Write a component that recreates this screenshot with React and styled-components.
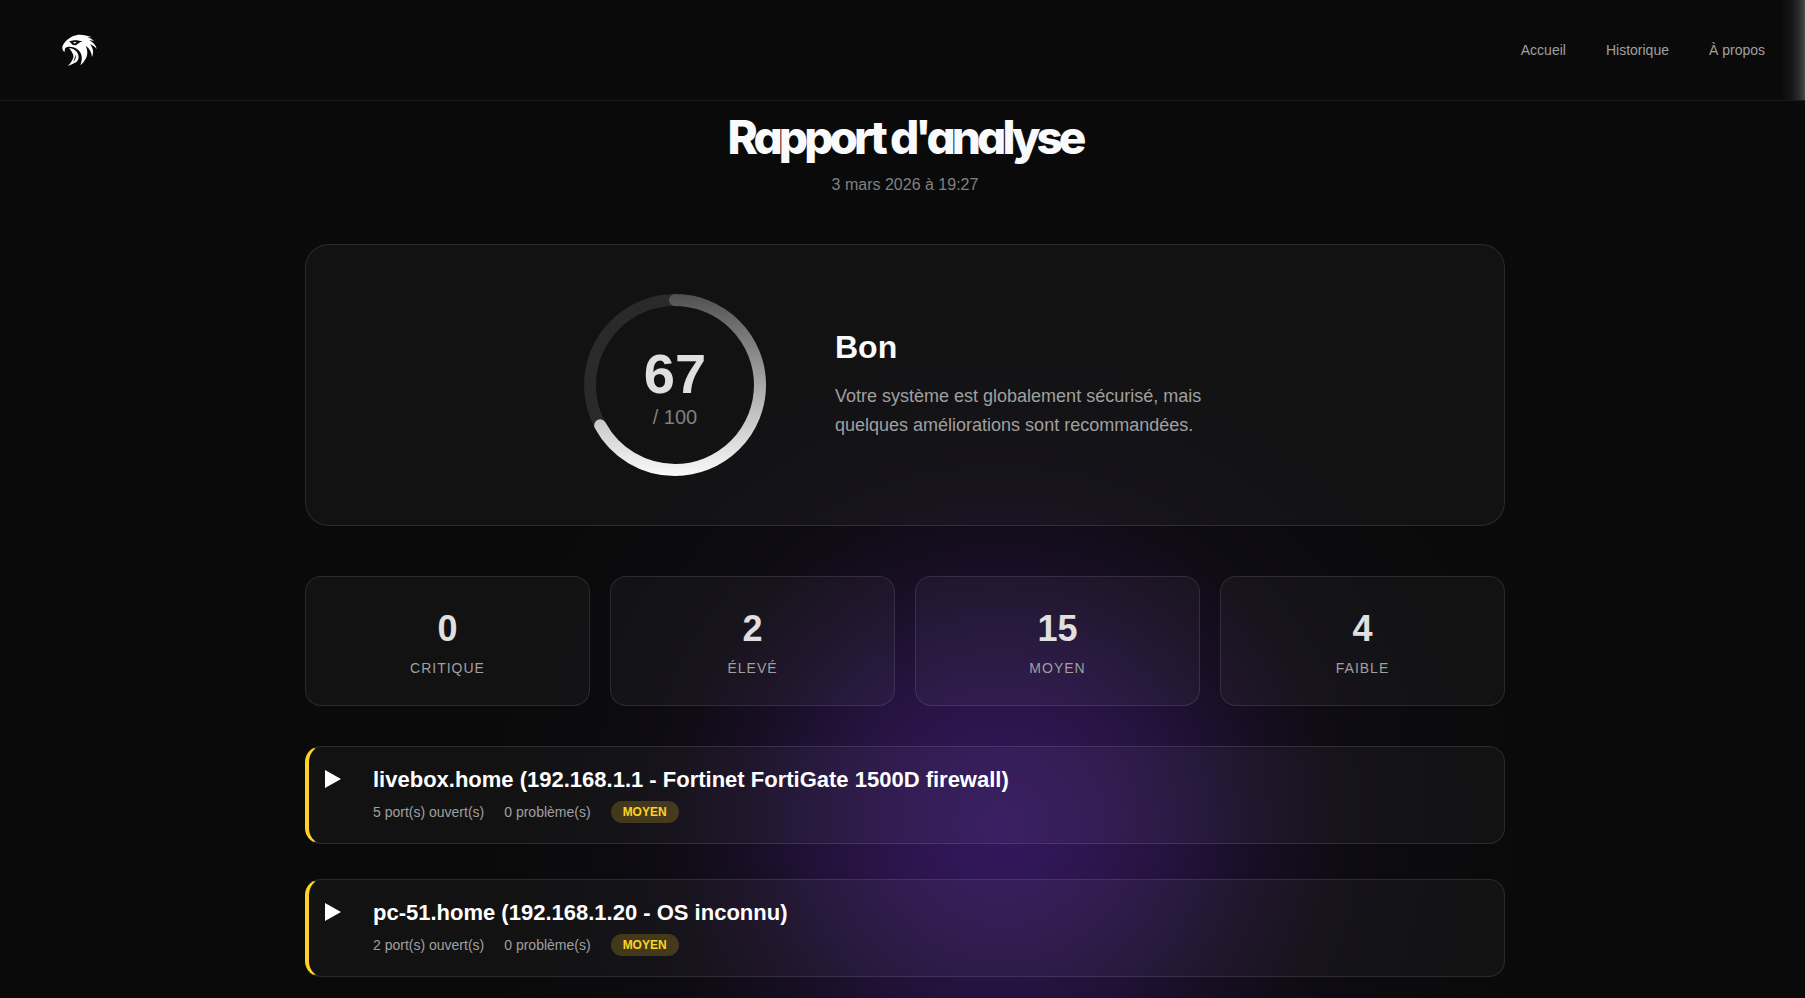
import React, { useState } from 'react';
import styled, { createGlobalStyle, css } from 'styled-components';

const GlobalStyle = createGlobalStyle`
  * {
    box-sizing: border-box;
  }

  body {
    margin: 0;
    background: #0a0a0a;
    color: #f8fafc;
    font-family: 'Liberation Sans', Arial, sans-serif;
    font-size: 16px;
    line-height: 24px;
    overflow: hidden;
  }

  h1, h2, h3, p, dl, dd {
    margin: 0;
  }
`;

const Page = styled.div`
  position: relative;
  height: 100vh;
  overflow: hidden;
`;

const Glow = styled.div`
  position: absolute;
  left: 1002px;
  top: 824px;
  width: 1080px;
  height: 1080px;
  transform: translate(-50%, -50%);
  pointer-events: none;
  background: radial-gradient(
    circle closest-side,
    rgba(88, 36, 168, 0.53) 0%,
    rgba(84, 34, 158, 0.48) 16%,
    rgba(78, 32, 144, 0.38) 32%,
    rgba(68, 28, 120, 0.23) 48%,
    rgba(52, 26, 100, 0.11) 62%,
    rgba(40, 24, 90, 0.04) 78%,
    transparent 100%
  );
`;

const Header = styled.header`
  position: relative;
  display: flex;
  align-items: center;
  justify-content: space-between;
  height: 101px;
  padding: 0 40px;
  border-bottom: 1px solid #181818;
  background:
    linear-gradient(to left, #4a4a4a 0, #2a2a2a 6px, #151515 14px, transparent 24px),
    #0a0a0a;
`;

const LogoLink = styled.a`
  display: flex;
  justify-content: center;
  width: 78px;
`;

const Nav = styled.nav`
  display: flex;
  gap: 40px;
`;

const NavLink = styled.a`
  color: #a0a0a0;
  font-size: 14px;
  text-decoration: none;
`;

const Main = styled.main`
  position: relative;
  padding: 8px 0 0 5px;
`;

const Container = styled.div`
  display: flex;
  flex-direction: column;
  max-width: 1200px;
  margin: 0 auto;
`;

const Title = styled.h1`
  font-family: Inter, sans-serif;
  font-feature-settings: 'cv11';
  font-size: 46px;
  font-weight: 800;
  line-height: 56px;
  letter-spacing: -4px;
  text-align: center;
`;

const ReportDate = styled.p`
  margin-top: 8px;
  color: #808080;
  text-align: center;
`;

const panel = css`
  border: 1px solid rgba(255, 255, 255, 0.1);
  background: rgba(255, 255, 255, 0.036);
`;

const ScoreCard = styled.section`
  ${panel}
  display: flex;
  align-items: center;
  justify-content: center;
  gap: 60px;
  height: 282px;
  margin-top: 47px;
  border-radius: 24px;
`;

const Gauge = styled.div`
  display: grid;
  place-items: center;

  > * {
    grid-area: 1 / 1;
  }
`;

const GaugeText = styled.div`
  display: flex;
  flex-direction: column;
  align-items: center;
  padding-top: 8px;
`;

const GaugeValue = styled.span`
  color: #e0e0e0;
  font-size: 56px;
  font-weight: 700;
  line-height: 56px;
`;

const GaugeMax = styled.span`
  color: #808080;
  font-size: 20px;
  line-height: 30px;
`;

const ScoreInfo = styled.div`
  width: 400px;
`;

const Grade = styled.h2`
  font-size: 32px;
  font-weight: 700;
  line-height: 34px;
`;

const Description = styled.p`
  margin-top: 18px;
  color: #a0a0a0;
  font-size: 18px;
  line-height: 29px;
`;

const Stats = styled.dl`
  display: grid;
  grid-template-columns: repeat(4, 1fr);
  gap: 20px;
  margin-top: 50px;
`;

const Stat = styled.div`
  ${panel}
  display: flex;
  flex-direction: column-reverse;
  justify-content: center;
  gap: 7px;
  height: 130px;
  padding-top: 6px;
  border-radius: 16px;
  text-align: center;
`;

const StatLabel = styled.dt`
  color: #a0a0a0;
  font-size: 14px;
  letter-spacing: 1px;
  text-transform: uppercase;
`;

const StatValue = styled.dd`
  color: #e0e0e0;
  font-size: 36px;
  font-weight: 700;
  line-height: 40px;
`;

const Hosts = styled.div`
  display: flex;
  flex-direction: column;
  gap: 35px;
  margin-top: 40px;
`;

const Host = styled.article`
  ${panel}
  display: flex;
  gap: 32px;
  height: 98px;
  padding: 18px 24px 0 16px;
  border-left: 4px solid #ffd324;
  border-radius: 16px;
`;

const Toggle = styled.button`
  display: flex;
  align-items: center;
  width: 16px;
  height: 28px;
  padding: 0;
  border: 0;
  background: none;
  color: #fff;
  cursor: pointer;

  svg {
    transform: rotate(${({ $open }) => ($open ? '90deg' : '0deg')});
  }
`;

const HostName = styled.h3`
  color: #fff;
  font-size: 22px;
  font-weight: 700;
  line-height: 30px;
`;

const HostMeta = styled.div`
  display: flex;
  align-items: center;
  gap: 20px;
  margin-top: 6px;
  color: #a0a0a0;
  font-size: 14px;
  line-height: 22px;
`;

const Badge = styled.span`
  padding: 0 12px;
  border-radius: 12px;
  background: rgba(255, 211, 36, 0.2);
  color: #ffd324;
  font-size: 12px;
  font-weight: 700;
  text-transform: uppercase;
`;

const stats = [
  { label: 'Critique', value: 0 },
  { label: 'Élevé', value: 2 },
  { label: 'Moyen', value: 15 },
  { label: 'Faible', value: 4 },
];

const hosts = [
  {
    id: 1, name: 'livebox.home (192.168.1.1 - Fortinet FortiGate 1500D firewall)', ports: 5, issues: 0, level: 'Moyen',
  },
  {
    id: 2, name: 'pc-51.home (192.168.1.20 - OS inconnu)', ports: 2, issues: 0, level: 'Moyen',
  },
];

function EagleLogo() {
  return (
    <svg width="35" height="32" viewBox="0 0 105 96" fill="#fff" aria-hidden="true">
      <path d="M8 54 C1 50 -1 40 3 33 C8 23 20 13 32 7 C46 0 66 0 90 10 L76 9 C86 13 92 17 98 22 C92 20 86 19 82 19 C94 26 102 34 104 45 C98 38 92 34 84 31 C93 42 96 54 90 69 C89 55 83 43 71 35 C78 50 78 66 68 79 C65 85 60 90 55 94 C60 80 62 66 54 54 C49 47 42 42 34 40 C25 37 16 37 10 42 C8 46 8 50 8 54 Z" />
      <path d="M21 43 C35 43 46 51 49 64 C52 77 45 86 33 89 C28 91 22 94 17 96 C24 89 29 83 31 77 C36 71 35 63 31 57 C29 52 25 47 21 43 Z" />
      <path d="M40 60 C43 69 41 76 35 82 C34 76 41 72 40 60 Z" fill="#0a0a0a" />
      <path d="M21 23 C32 17 48 17 62 23 C53 23 48 29 43 33 C34 35 28 31 27 26 Z" fill="#0a0a0a" />
      <path d="M33 25 L43 24 C42 29 36 30 33 25 Z" />
    </svg>
  );
}

function ScoreGauge({ score }) {
  const radius = 85;
  const length = 2 * Math.PI * radius;

  return (
    <Gauge>
      <svg width="200" height="200" viewBox="0 0 200 200" fill="none" strokeWidth="12" aria-hidden="true">
        <defs>
          {/* the arc is rotated by -90deg, so its right side is the top on screen */}
          <linearGradient id="score" x1="191" y1="0" x2="9" y2="0" gradientUnits="userSpaceOnUse">
            <stop offset="0" stopColor="#505050" />
            <stop offset="0.5" stopColor="#a8a8a8" />
            <stop offset="1" stopColor="#fafafa" />
          </linearGradient>
        </defs>
        <circle cx="100" cy="100" r={radius} stroke="#2a2a2a" />
        <circle
          cx="100"
          cy="100"
          r={radius}
          stroke="url(#score)"
          strokeLinecap="round"
          strokeDasharray={`${(length * score) / 100} ${length}`}
          transform="rotate(-90 100 100)"
        />
      </svg>
      <GaugeText>
        <GaugeValue>{score}</GaugeValue>
        <GaugeMax>/ 100</GaugeMax>
      </GaugeText>
    </Gauge>
  );
}

function HostCard({ host }) {
  const [open, setOpen] = useState(false);

  return (
    <Host>
      <Toggle type="button" $open={open} aria-expanded={open} aria-label={host.name} onClick={() => setOpen(!open)}>
        <svg width="16" height="18" viewBox="0 0 16 18" fill="currentColor" aria-hidden="true">
          <path d="M0 0 L16 9 L0 18 Z" />
        </svg>
      </Toggle>
      <div>
        <HostName>{host.name}</HostName>
        <HostMeta>
          <span>{`${host.ports} port(s) ouvert(s)`}</span>
          <span>{`${host.issues} problème(s)`}</span>
          <Badge>{host.level}</Badge>
        </HostMeta>
      </div>
    </Host>
  );
}

function App() {
  return (
    <Page>
      <GlobalStyle />
      <Glow />
      <Header>
        <LogoLink href="#accueil" aria-label="Accueil">
          <EagleLogo />
        </LogoLink>
        <Nav>
          <NavLink href="#accueil">Accueil</NavLink>
          <NavLink href="#historique">Historique</NavLink>
          <NavLink href="#a-propos">À propos</NavLink>
        </Nav>
      </Header>
      <Main>
        <Container>
          <Title>Rapport d&apos;analyse</Title>
          <ReportDate>3 mars 2026 à 19:27</ReportDate>
          <ScoreCard>
            <ScoreGauge score={67} />
            <ScoreInfo>
              <Grade>Bon</Grade>
              <Description>
                Votre système est globalement sécurisé, mais quelques améliorations sont recommandées.
              </Description>
            </ScoreInfo>
          </ScoreCard>
          <Stats>
            {stats.map((stat) => (
              <Stat key={stat.label}>
                <StatLabel>{stat.label}</StatLabel>
                <StatValue>{stat.value}</StatValue>
              </Stat>
            ))}
          </Stats>
          <Hosts>
            {hosts.map((host) => (
              <HostCard key={host.id} host={host} />
            ))}
          </Hosts>
        </Container>
      </Main>
    </Page>
  );
}

export default App;
